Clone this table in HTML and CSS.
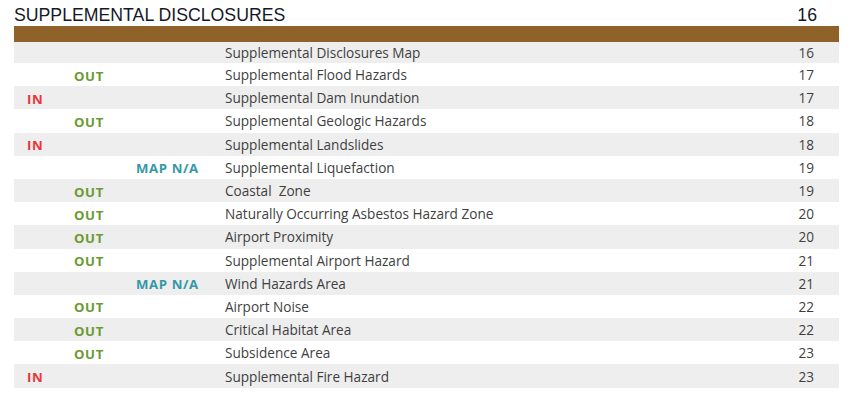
FILE: index.html
```html
<!DOCTYPE html>
<html>
<head>
<meta charset="utf-8">
<link rel="stylesheet" href="styles.css">
</head>
<body>
<div class="page">
  <div class="title">
    <span class="title-text">SUPPLEMENTAL DISCLOSURES</span>
    <span class="title-num">16</span>
  </div>
  <div class="bar"></div>
  <div class="table">
    <div class="row alt first"><span class="c1"></span><span class="c2"></span><span class="c3"></span><span class="name">Supplemental Disclosures Map</span><span class="num">16</span></div>
    <div class="row"><span class="c1"></span><span class="c2 out">OUT</span><span class="c3"></span><span class="name">Supplemental Flood Hazards</span><span class="num">17</span></div>
    <div class="row alt"><span class="c1 in">IN</span><span class="c2"></span><span class="c3"></span><span class="name">Supplemental Dam Inundation</span><span class="num">17</span></div>
    <div class="row"><span class="c1"></span><span class="c2 out">OUT</span><span class="c3"></span><span class="name">Supplemental Geologic Hazards</span><span class="num">18</span></div>
    <div class="row alt"><span class="c1 in">IN</span><span class="c2"></span><span class="c3"></span><span class="name">Supplemental Landslides</span><span class="num">18</span></div>
    <div class="row"><span class="c1"></span><span class="c2"></span><span class="c3 na">MAP N/A</span><span class="name">Supplemental Liquefaction</span><span class="num">19</span></div>
    <div class="row alt"><span class="c1"></span><span class="c2 out">OUT</span><span class="c3"></span><span class="name">Coastal&nbsp; Zone</span><span class="num">19</span></div>
    <div class="row"><span class="c1"></span><span class="c2 out">OUT</span><span class="c3"></span><span class="name">Naturally Occurring Asbestos Hazard Zone</span><span class="num">20</span></div>
    <div class="row alt"><span class="c1"></span><span class="c2 out">OUT</span><span class="c3"></span><span class="name">Airport Proximity</span><span class="num">20</span></div>
    <div class="row"><span class="c1"></span><span class="c2 out">OUT</span><span class="c3"></span><span class="name">Supplemental Airport Hazard</span><span class="num">21</span></div>
    <div class="row alt"><span class="c1"></span><span class="c2"></span><span class="c3 na">MAP N/A</span><span class="name">Wind Hazards Area</span><span class="num">21</span></div>
    <div class="row"><span class="c1"></span><span class="c2 out">OUT</span><span class="c3"></span><span class="name">Airport Noise</span><span class="num">22</span></div>
    <div class="row alt"><span class="c1"></span><span class="c2 out">OUT</span><span class="c3"></span><span class="name">Critical Habitat Area</span><span class="num">22</span></div>
    <div class="row"><span class="c1"></span><span class="c2 out">OUT</span><span class="c3"></span><span class="name">Subsidence Area</span><span class="num">23</span></div>
    <div class="row alt"><span class="c1 in">IN</span><span class="c2"></span><span class="c3"></span><span class="name">Supplemental Fire Hazard</span><span class="num">23</span></div>
  </div>
</div>
</body>
</html>
```
FILE: styles.css
```css
html, body {
  margin: 0;
  padding: 0;
  background: #ffffff;
}
.page {
  width: 825px;
  margin-left: 14px;
  font-family: "Open Sans", "Liberation Sans", sans-serif;
}
.title {
  height: 26px;
  display: flex;
  justify-content: space-between;
  align-items: flex-end;
  font-family: "Liberation Sans", Arial, sans-serif;
  font-size: 17.7px;
  color: #161826;
  line-height: 20px;
}
.title-text {
  padding-bottom: 1px;
}
.title-num {
  padding-right: 22px;
  padding-bottom: 1px;
}
.bar {
  height: 16px;
  background: #8e6229;
}
.row {
  display: grid;
  grid-template-columns: 60px 62px 89px 1fr 60px;
  height: 23.2px;
  align-items: center;
  font-size: 13.6px;
  color: #3f3f3f;
}
.row.first {
  height: 21px;
}
.row.alt {
  background: #eeeeee;
}
.c1 {
  padding-left: 13px;
}
.in, .out, .na {
  font-weight: 700;
  font-size: 13.2px;
  letter-spacing: 0.6px;
  padding-top: 2px;
}
.in { color: #e8363c; }
.out { color: #6b9a33; }
.na { color: #3598a8; }
.name {
  white-space: nowrap;
}
.num {
  text-align: right;
  padding-right: 25px;
}
```
